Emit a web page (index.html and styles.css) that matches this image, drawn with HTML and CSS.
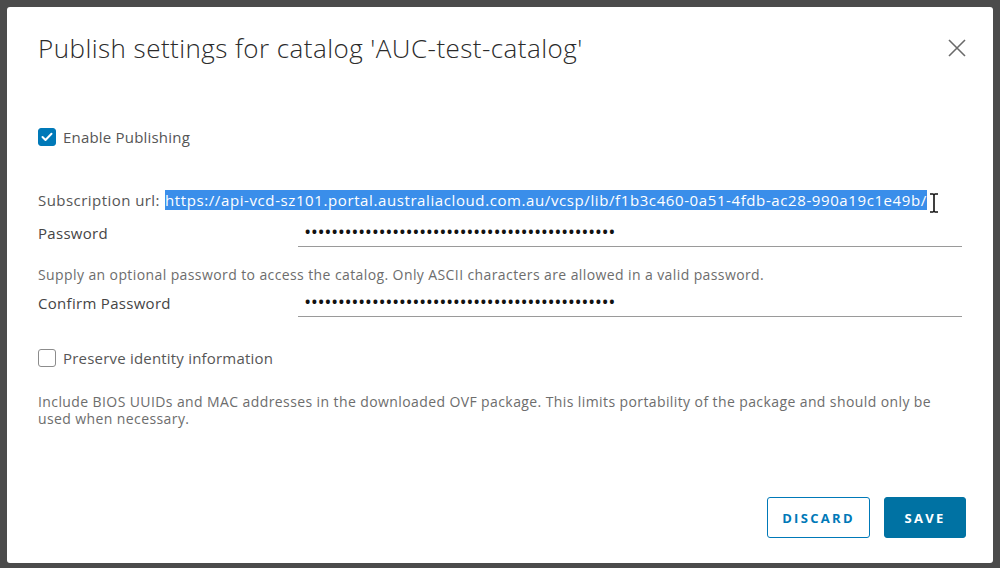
FILE: index.html
```html
<!DOCTYPE html>
<html lang="en">
<head>
<meta charset="UTF-8" />
<title>Publish settings</title>
<link rel="stylesheet" href="styles.css">
</head>
<body>

<div class="modal" role="dialog" aria-label="Publish settings">
  <header class="modal-header">
    <h2>Publish settings for catalog 'AUC-test-catalog'</h2>
    <button class="close" aria-label="Close">
      <svg width="18" height="18" viewBox="0 0 18 18"><path d="M1 1 L17 17 M17 1 L1 17" stroke="#6a6a6a" stroke-width="1.6" fill="none"/></svg>
    </button>
  </header>

  <div class="modal-body">
    <label class="check-row publish">
      <span class="box checked">
        <svg width="12" height="10" viewBox="0 0 12 10"><path d="M1.5 5 L4.5 8 L10.5 1.8" stroke="#fff" stroke-width="2" fill="none" stroke-linecap="round" stroke-linejoin="round"/></svg>
      </span>
      Enable Publishing
    </label>

    <div class="url-row">
      <span class="url-label">Subscription url:</span>
      <span class="url selected">https://api-vcd-sz101.portal.australiacloud.com.au/vcsp/lib/f1b3c460-0a51-4fdb-ac28-990a19c1e49b/</span>
      <svg class="ibeam" width="10" height="20" viewBox="0 0 10 20"><path d="M1 1 H4 Q5 1 5 3 V17 Q5 19 4 19 H1 M9 1 H6 Q5 1 5 3 M5 17 Q5 19 6 19 H9" stroke="#111" stroke-width="1.6" fill="none"/></svg>
    </div>

    <div class="field pw">
      <span class="field-label">Password</span>
      <div class="input">••••••••••••••••••••••••••••••••••••••••••••••</div>
    </div>
    <p class="help pw-help">Supply an optional password to access the catalog. Only ASCII characters are allowed in a valid password.</p>

    <div class="field confirm">
      <span class="field-label">Confirm Password</span>
      <div class="input">••••••••••••••••••••••••••••••••••••••••••••••</div>
    </div>

    <label class="check-row preserve">
      <span class="box"></span>
      Preserve identity information
    </label>
    <p class="help ovf-help">Include BIOS UUIDs and MAC addresses in the downloaded OVF package. This limits portability of the package and should only be used when necessary.</p>
  </div>

  <footer class="modal-footer">
    <button class="btn btn-outline">Discard</button>
    <button class="btn btn-primary">Save</button>
  </footer>
</div>

</body>
</html>
```

FILE: styles.css
```css
body { margin: 0; background: #4b4b4b; font-family: "Open Sans", Arial, sans-serif; color: #565656; }
.modal { margin: 7px 7px 0 7px; width: 986px; height: 556px; background: #fff; border-radius: 3px; padding: 0 31px; box-sizing: border-box; display: flex; flex-direction: column; }
.modal-header { display: flex; justify-content: space-between; align-items: center; padding-top: 24px; }
.modal-header h2 { margin: 0; font-family: "Open Sans", sans-serif; font-weight: 300; font-size: 26px; line-height: 34px; letter-spacing: 0.45px; color: #2b2b2b; }
.close { background: none; border: 0; padding: 0; margin-right: -4px; width: 18px; height: 18px; cursor: pointer; }
.close svg { display: block; }
.modal-body { flex: 1; }
.check-row { display: flex; align-items: center; height: 24px; font-size: 15px; letter-spacing: 0.2px; color: #565656; }
.check-row.publish { margin-top: 60px; }
.check-row.preserve { margin-top: 29px; }
.box { width: 16px; height: 16px; border: 1px solid #8c8c8c; border-radius: 3px; margin-right: 7px; display: flex; align-items: center; justify-content: center; }
.box.checked { background: #0079b8; border-color: #0079b8; }
.url-row { margin-top: 41px; height: 20px; display: flex; align-items: center; font-size: 15px; letter-spacing: 0.6px; white-space: nowrap; }
.url-label { margin-right: 5px; letter-spacing: 0.45px; }
.url.selected { background: #3a8eea; color: #fff; line-height: 20px; }
.ibeam { margin-left: 2px; margin-top: 6px; }
.field { display: grid; grid-template-columns: 260px 1fr; align-items: center; height: 28px; font-size: 15px; letter-spacing: 0.3px; }
.field.pw { margin-top: 9px; }
.field.confirm { margin-top: 6px; }
.field-label { color: #454545; }
.input { height: 28px; line-height: 26px; border-bottom: 1px solid #9a9a9a; box-sizing: border-box; padding-left: 7px; font-size: 14px; font-weight: 700; color: #111; letter-spacing: 1.5px; }
.help { margin: 0; font-size: 14px; line-height: 17px; letter-spacing: 0.4px; color: #6d6d6d; }
.pw-help { margin-top: 19px; }
.ovf-help { margin-top: 23px; }
.modal-footer { display: flex; justify-content: flex-end; gap: 14px; padding-bottom: 25px; margin-right: -4px; }
.btn { height: 41px; padding: 0 10px; border-radius: 3px; font-family: "Open Sans", sans-serif; font-size: 13px; font-weight: 700; letter-spacing: 2.3px; text-transform: uppercase; cursor: pointer; }
.btn-outline { background: #fff; color: #0079b8; border: 1px solid #0079b8; width: 103px; }
.btn-primary { background: #0072a3; color: #fff; border: 1px solid #0072a3; width: 82px; }
```
